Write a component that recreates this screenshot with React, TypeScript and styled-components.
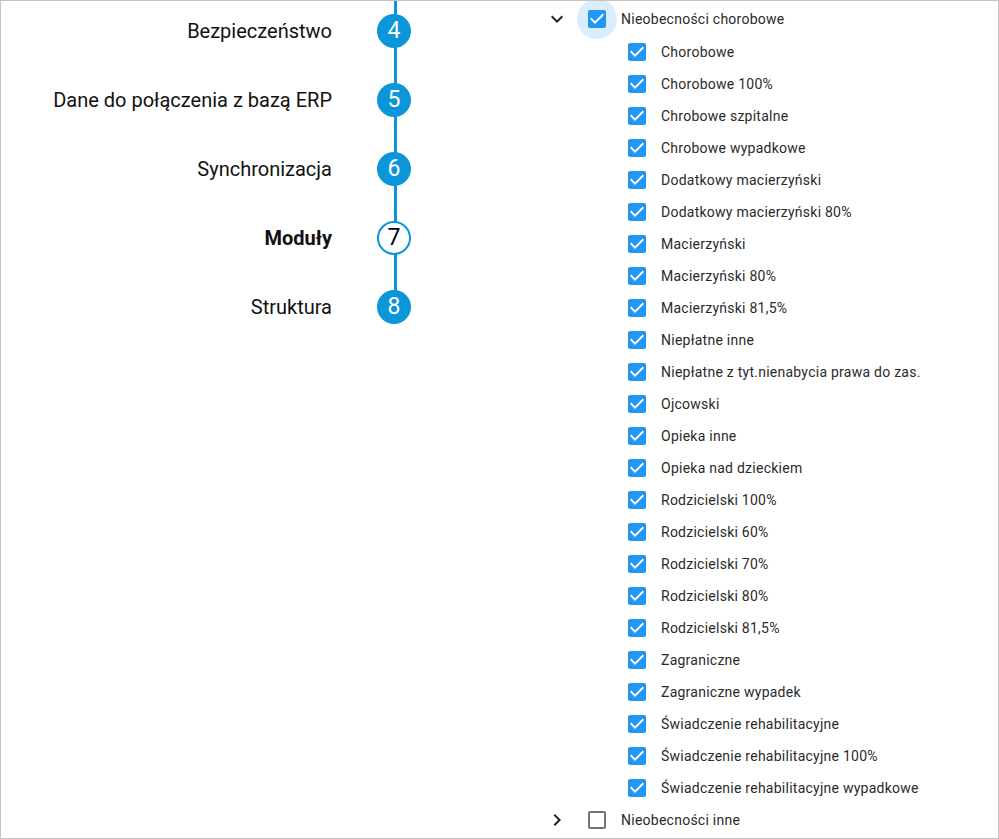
import React from "react";
import styled, { createGlobalStyle } from "styled-components";

const Global = createGlobalStyle`
  html, body { margin: 0; padding: 0; background: #fff; }
  body { font-family: Roboto, "Noto Sans", Arial, sans-serif; }
`;

const Frame = styled.div`
  box-sizing: border-box;
  width: 999px;
  height: 839px;
  border: 1px solid #c4c4c4;
  overflow: hidden;
  display: flex;
  align-items: flex-start;
`;

const StepsPanel = styled.div`
  width: 410px;
  flex: none;
  margin-top: -5px;
  display: flex;
  flex-direction: column;
`;

const StepRow = styled.div<{ $last?: boolean }>`
  display: grid;
  grid-template-columns: 1fr 34px;
  column-gap: 45px;
  align-items: center;
  height: 69px;
  position: relative;
  &::before {
    content: "";
    position: absolute;
    right: 14.5px;
    width: 3px;
    top: 0;
    bottom: ${(p) => (p.$last ? "50%" : "0")};
    background: #0a96d9;
  }
`;

const StepLabel = styled.div<{ $active?: boolean }>`
  text-align: right;
  font-size: 20px;
  font-weight: ${(p) => (p.$active ? 700 : 400)};
  color: #111;
`;

const StepCircle = styled.div<{ $active?: boolean }>`
  position: relative;
  z-index: 1;
  box-sizing: border-box;
  width: 34px;
  height: 34px;
  border-radius: 50%;
  display: flex;
  align-items: center;
  justify-content: center;
  font-size: 23px;
  background: ${(p) => (p.$active ? "#fff" : "#0a96d9")};
  border: ${(p) => (p.$active ? "2px solid #0a96d9" : "none")};
  color: ${(p) => (p.$active ? "#000" : "#fff")};
`;

const Tree = styled.div`
  margin-left: 134px;
  padding-top: 2px;
  display: flex;
  flex-direction: column;
`;

const NodeRow = styled.div<{ $child?: boolean }>`
  display: flex;
  align-items: center;
  height: 32px;
  padding-left: ${(p) => (p.$child ? "72px" : "0")};
`;

const ParentRow = styled(NodeRow)`
  margin-bottom: 1px;
`;

const Toggle = styled.span`
  width: 24px;
  height: 24px;
  margin-right: 8px;
  display: flex;
  align-items: center;
  justify-content: center;
  color: #222;
`;

const CheckWrap = styled.span<{ $focus?: boolean }>`
  width: 40px;
  height: 40px;
  flex: none;
  border-radius: 50%;
  display: flex;
  align-items: center;
  justify-content: center;
  background: ${(p) => (p.$focus ? "rgba(33,150,243,0.17)" : "transparent")};
`;

const Label = styled.span`
  margin-left: 4px;
  font-size: 14px;
  color: #2a2a2a;
  letter-spacing: 0.25px;
  white-space: nowrap;
`;

const CHECKED =
  "M19 3H5c-1.11 0-2 .9-2 2v14c0 1.1.89 2 2 2h14c1.11 0 2-.9 2-2V5c0-1.1-.89-2-2-2zm-9 14l-5-5 1.41-1.41L10 14.17l7.59-7.59L19 8l-9 9z";
const UNCHECKED =
  "M19 5v14H5V5h14m0-2H5c-1.1 0-2 .9-2 2v14c0 1.1.9 2 2 2h14c1.1 0 2-.9 2-2V5c0-1.1-.9-2-2-2z";

const CheckIcon = ({ checked }: { checked: boolean }) => (
  <svg width="24" height="24" viewBox="0 0 24 24">
    {checked && <rect x="6" y="6" width="12" height="12" fill="#fff" />}
    <path d={checked ? CHECKED : UNCHECKED} fill={checked ? "#2196f3" : "#757575"} />
  </svg>
);

const Chevron = ({ open }: { open: boolean }) => (
  <svg width="24" height="24" viewBox="0 0 24 24">
    <path
      d={open ? "M16.59 8.59 12 13.17 7.41 8.59 6 10l6 6 6-6z" : "M10 6 8.59 7.41 13.17 12l-4.58 4.59L10 18l6-6z"}
      fill="#222"
    />
  </svg>
);

const steps = [
  { n: 4, label: "Bezpieczeństwo" },
  { n: 5, label: "Dane do połączenia z bazą ERP" },
  { n: 6, label: "Synchronizacja" },
  { n: 7, label: "Moduły", active: true },
  { n: 8, label: "Struktura" },
];

const children = [
  "Chorobowe",
  "Chorobowe 100%",
  "Chrobowe szpitalne",
  "Chrobowe wypadkowe",
  "Dodatkowy macierzyński",
  "Dodatkowy macierzyński 80%",
  "Macierzyński",
  "Macierzyński 80%",
  "Macierzyński 81,5%",
  "Niepłatne inne",
  "Niepłatne z tyt.nienabycia prawa do zas.",
  "Ojcowski",
  "Opieka inne",
  "Opieka nad dzieckiem",
  "Rodzicielski 100%",
  "Rodzicielski 60%",
  "Rodzicielski 70%",
  "Rodzicielski 80%",
  "Rodzicielski 81,5%",
  "Zagraniczne",
  "Zagraniczne wypadek",
  "Świadczenie rehabilitacyjne",
  "Świadczenie rehabilitacyjne 100%",
  "Świadczenie rehabilitacyjne wypadkowe",
];

export default function App() {
  return (
    <>
      <Global />
      <Frame>
        <StepsPanel>
          {steps.map((s, i) => (
            <StepRow key={s.n} $last={i === steps.length - 1}>
              <StepLabel $active={s.active}>{s.label}</StepLabel>
              <StepCircle $active={s.active}>{s.n}</StepCircle>
            </StepRow>
          ))}
        </StepsPanel>
        <Tree>
          <ParentRow>
            <Toggle>
              <Chevron open />
            </Toggle>
            <CheckWrap $focus>
              <CheckIcon checked />
            </CheckWrap>
            <Label>Nieobecności chorobowe</Label>
          </ParentRow>
          {children.map((c) => (
            <NodeRow key={c} $child>
              <CheckWrap>
                <CheckIcon checked />
              </CheckWrap>
              <Label>{c}</Label>
            </NodeRow>
          ))}
          <NodeRow>
            <Toggle>
              <Chevron open={false} />
            </Toggle>
            <CheckWrap>
              <CheckIcon checked={false} />
            </CheckWrap>
            <Label>Nieobecności inne</Label>
          </NodeRow>
        </Tree>
      </Frame>
    </>
  );
}
